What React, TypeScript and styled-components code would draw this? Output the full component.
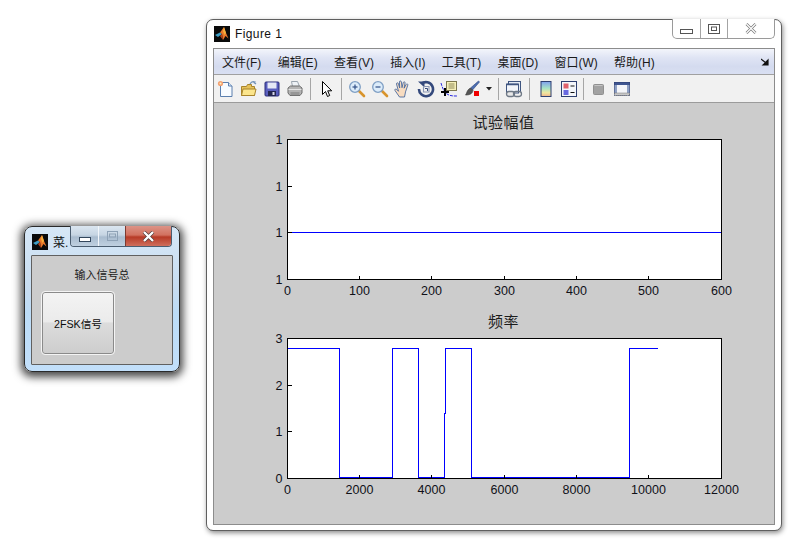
import styled, { createGlobalStyle } from "styled-components";

const GlobalStyle = createGlobalStyle`
    html, body {
        margin: 0;
        background: #ffffff;
    }
    * {
        box-sizing: border-box;
    }
`;

const FONT = `"Liberation Sans", "Noto Sans CJK SC", sans-serif`;

const Desktop = styled.div`
    position: relative;
    width: 794px;
    height: 541px;
    overflow: hidden;
    font-family: ${FONT};
`;

// ---- big figure window ----
const FigureWindow = styled.div`
    position: absolute;
    left: 206px;
    top: 19px;
    width: 576px;
    height: 512px;
    padding: 0 6px;
    background: #ffffff;
    border: 1px solid #5f5f5f;
    border-radius: 7px;
    box-shadow: 1px 2px 5px rgba(0, 0, 0, 0.45);
`;

const FigureTitleBar = styled.div`
    display: flex;
    align-items: center;
    gap: 5px;
    height: 28px;
    padding: 0 0 1px 1px;
`;

const FigureTitle = styled.span`
    font-size: 12px;
    letter-spacing: 0.4px;
    color: #111111;
`;

const FigureControls = styled.div`
    position: absolute;
    top: -1px;
    right: 6px;
    display: flex;
    height: 20px;
    background: #ffffff;
    border: 1px solid #9a9a9a;
    border-top: none;
    border-radius: 0 0 5px 5px;
`;

const ControlCell = styled.div<{ $w: number; $low?: boolean }>`
    display: flex;
    align-items: center;
    justify-content: center;
    width: ${p => p.$w}px;
    padding-top: ${p => (p.$low ? 5 : 0)}px;
    border-left: 1px solid #a4a4a4;
    &:first-child {
        border-left: none;
    }
`;

const FigureClient = styled.div`
    display: flex;
    flex-direction: column;
    height: 477px;
    width: 562px;
    border: 1px solid #8c8c8c;
`;

const MenuBar = styled.div`
    position: relative;
    display: flex;
    align-items: center;
    gap: 16.3px;
    height: 26px;
    padding: 0 0 0 8px;
    background: linear-gradient(#f3f5fb 0%, #dfe4f4 35%, #d4dbef 70%, #d9dff2 100%);
    border-bottom: 1px solid #a0a0a0;
`;

const MenuItem = styled.span`
    font-size: 12px;
    color: #1a1a1a;
    white-space: nowrap;
`;

const MenuCorner = styled.svg`
    position: absolute;
    right: 5px;
    top: 9px;
`;

const ToolBar = styled.div`
    display: flex;
    align-items: center;
    height: 28px;
    background: #f1f1f1;
    border-bottom: 1px solid #9b9b9b;
`;

const ToolCell = styled.div`
    display: flex;
    align-items: center;
    justify-content: center;
    flex: none;
    width: 23px;
    height: 22px;
`;

const DropCell = styled.div`
    display: flex;
    align-items: center;
    justify-content: center;
    flex: none;
    width: 12px;
    height: 22px;
`;

const ToolSep = styled.div<{ $w: number }>`
    display: flex;
    justify-content: center;
    flex: none;
    width: ${p => p.$w}px;
    height: 22px;
    &::before {
        content: "";
        width: 1px;
        background: #a6a6a6;
    }
`;

const PlotCanvas = styled.div`
    flex: 1;
    padding-top: 12px;
    background: #cccccc;
`;

const PlotBlock = styled.div`
    margin-bottom: 14px;
`;

const PlotTitle = styled.div`
    width: 560px;
    padding-left: 19px;
    height: 15px;
    line-height: 16px;
    text-align: center;
    font-size: 15px;
    letter-spacing: 0.5px;
    color: #1c1c1c;
`;

const PlotSvg = styled.svg`
    display: block;
    text {
        font-family: ${FONT};
        font-size: 12.5px;
        fill: #101018;
    }
`;

// ---- small menu window ----
const MenuWindow = styled.div`
    position: absolute;
    left: 24px;
    top: 226px;
    width: 156px;
    height: 146px;
    padding: 0 6px 7px;
    background: linear-gradient(#d6e7f6 0%, #c6dcf1 45%, #bcdcf7 60%, #c2dffa 100%);
    border: 1px solid #2a2a2a;
    border-radius: 8px;
    box-shadow: 0 2px 9px 3px rgba(0, 0, 0, 0.72);
`;

const MenuTitleBar = styled.div`
    display: flex;
    align-items: center;
    gap: 5px;
    height: 28px;
    padding: 1px 0 0 1px;
    font-size: 12px;
    color: #111111;
`;

const MenuTitleText = styled.span`
    width: 17px;
    overflow: hidden;
    white-space: nowrap;
`;

const MenuControls = styled.div`
    position: absolute;
    top: -1px;
    right: 7px;
    display: flex;
    height: 21px;
    border: 1px solid #4a5d70;
    border-top: none;
    border-radius: 0 0 4px 4px;
    overflow: hidden;
`;

const GlassCell = styled.div<{ $w: number; $red?: boolean; $low?: boolean }>`
    display: flex;
    align-items: center;
    justify-content: center;
    width: ${p => p.$w}px;
    padding-top: ${p => (p.$low ? 6 : 0)}px;
    border-left: 1px solid ${p => (p.$red ? "#7d3a30" : "#f2f6fa")};
    background: ${p =>
        p.$red
            ? "linear-gradient(#dc9387 0%, #d2715f 45%, #b73a26 55%, #cf6f5d 100%)"
            : "linear-gradient(#dbe6f0 0%, #c6d5e3 45%, #a9bccf 55%, #bfd0e0 100%)"};
    &:first-child {
        border-left: none;
    }
`;

const MenuClient = styled.div`
    display: flex;
    flex-direction: column;
    height: 110px;
    background: #cccccc;
    border: 1px solid #606060;
    border-radius: 1px;
`;

const MenuLabel = styled.div`
    margin-top: 12px;
    height: 14px;
    line-height: 14px;
    text-align: center;
    font-size: 11px;
    color: #1a1a1a;
`;

const BigButton = styled.button`
    display: flex;
    align-items: center;
    justify-content: center;
    width: 72px;
    height: 62px;
    margin: 10px 0 0 10px;
    padding: 0;
    font-family: ${FONT};
    font-size: 10.7px;
    color: #0c0c0c;
    background: linear-gradient(#f3f3f3 0%, #ebebeb 48%, #dcdcdc 50%, #cdcdcd 100%);
    border: 1px solid #8a8a8a;
    border-radius: 3px;
    outline: 1px solid #f4f4f4;
`;

// ---- drawings ----
function MatlabLogo() {
    return (
        <svg width="16" height="16" viewBox="0 0 16 16">
            <rect width="16" height="16" fill="#0a0a0a" />
            <polygon points="1,9 6,6.5 8,8 4,11" fill="#3f9fc6" />
            <polygon points="6,6.5 10,1 12,7 14.5,12.5 11.5,10 9,14 8,8" fill="#e8772a" />
            <polygon points="10,1 12,7 10.5,9 9,5" fill="#f5b13c" />
            <polygon points="8,8 9,14 6,10" fill="#b8431c" />
        </svg>
    );
}

function NewIcon() {
    return (
        <svg width="18" height="18" viewBox="0 0 18 18">
            <path d="M3.5 2.5h8l3.5 3.5v10.500h-11.500z" fill="#f7fbff" stroke="#5b7fae" />
            <path d="M11.500 2.500v3.500h3.500" fill="#d6e4f4" stroke="#5b7fae" />
            <circle cx="3.500" cy="3.500" r="2.600" fill="#f3a070" />
            <circle cx="3.500" cy="3.500" r="1" fill="#fff2c0" />
        </svg>
    );
}

function OpenIcon() {
    return (
        <svg width="18" height="18" viewBox="0 0 18 18">
            <path d="M1.500 6.500h5l1-2h4v2h3v9h-13z" fill="#e6c25a" stroke="#a8842c" />
            <path d="M1.500 15.500l1.500-6.500h13l-1.500 6.500z" fill="#fbe58c" stroke="#a8842c" />
            <path d="M10 4c1-2 3-3 5-2l-1 .5 2 1.500" fill="none" stroke="#6f8fb5" strokeWidth="1.200" />
        </svg>
    );
}

function SaveIcon() {
    return (
        <svg width="18" height="18" viewBox="0 0 18 18">
            <rect x="2" y="2" width="14" height="14" rx="1" fill="#5a5fbe" stroke="#2a2d78" />
            <rect x="4.500" y="2.500" width="9" height="6" fill="#e6e9f6" />
            <rect x="5" y="11" width="8" height="5" fill="#24264f" />
            <rect x="9.500" y="12" width="2" height="3" fill="#d8d8e8" />
        </svg>
    );
}

function PrintIcon() {
    return (
        <svg width="18" height="18" viewBox="0 0 18 18">
            <path d="M5.500 1.500h6l2 5h-7z" fill="#eef2f6" stroke="#9aa4ae" />
            <path d="M2 8l2.500-2h9l2.500 2v5l-2 2.500h-10l-2-2.500z" fill="#b4b4b4" stroke="#6d6d6d" />
            <path d="M2.500 9.500h13" stroke="#e4e4e4" />
            <path d="M4.500 13h9M4.500 15h9" stroke="#7a7a7a" />
        </svg>
    );
}

function ArrowIcon() {
    return (
        <svg width="18" height="18" viewBox="0 0 18 18">
            <path d="M4.500 1.500v13l3-3 2 5 2.200-1-2-4.700h4z" fill="#ffffff" stroke="#000000" />
        </svg>
    );
}

function ZoomIcon({ plus }: { plus?: boolean }) {
    return (
        <svg width="18" height="18" viewBox="0 0 18 18">
            <path d="M10.500 10.500l5.500 5.500" stroke="#d8942c" strokeWidth="2.600" strokeLinecap="round" />
            <circle cx="7" cy="7" r="5.300" fill="#dcecfa" stroke="#7f9fc4" strokeWidth="1.300" />
            <path d="M4.500 7h5" stroke="#2f4f86" strokeWidth="1.200" />
            {plus && <path d="M7 4.500v5" stroke="#2f4f86" strokeWidth="1.200" />}
        </svg>
    );
}

function HandIcon() {
    return (
        <svg width="18" height="18" viewBox="0 0 18 18">
            <path
                d="M5.500 17l-4.500-6.500c-.7-1.300.9-2 1.800-1l1.700 1.800-2-7.300c-.2-1.400 1.500-1.600 1.900-.4l1.300 4.400-.3-6c0-1.400 1.900-1.400 2 0l.6 5.700 1.200-5c.3-1.300 2-1.100 1.900.2l-1 5.300 2-3.700c.6-1.100 2.100-.5 1.700.6l-2.300 6.800-1 5.100z"
                fill="#f8dcc0"
                stroke="#4a6a9e"
                strokeWidth="0.900"
            />
        </svg>
    );
}

function RotateIcon() {
    return (
        <svg width="18" height="18" viewBox="0 0 18 18">
            <path d="M4.500 3.800a7 7 0 1 1-2.500 5.200" fill="none" stroke="#34497c" strokeWidth="2.600" />
            <path d="M1 1.500h6.500v6z" fill="#34497c" />
            <path d="M6.500 6.500h5.500v5.500h-5.500z" fill="none" stroke="#8b97b4" strokeWidth="1.100" />
            <path d="M8 8.500h2.500v2.500" fill="none" stroke="#34497c" />
        </svg>
    );
}

function CursorIcon() {
    return (
        <svg width="18" height="18" viewBox="0 0 18 18">
            <path d="M1 3c1 4 3 9 6 11s6 2 10 2" fill="none" stroke="#2a2ae0" strokeDasharray="3 1" />
            <rect x="6.500" y="1.500" width="10" height="9" fill="#f5efb8" stroke="#7d7850" />
            <path d="M8.500 4h6M8.500 6h6M8.500 8h6" stroke="#8f8a5c" />
            <path d="M5 8v8M1 12h8" stroke="#000000" strokeWidth="2" />
        </svg>
    );
}

function BrushIcon() {
    return (
        <svg width="18" height="18" viewBox="0 0 18 18">
            <path d="M15.500 1l1 1-7 8-2-2z" fill="#4c6db0" stroke="#2e4680" strokeWidth="0.600" />
            <path d="M7.500 8l2.500 2.500c-.5 3-3 4.500-7.500 4.500 1.500-1.500 1-5 5-7z" fill="#565656" stroke="#333333" strokeWidth="0.600" />
            <rect x="11" y="11" width="5" height="5" fill="#f00000" />
        </svg>
    );
}

function DropIcon() {
    return (
        <svg width="6" height="4" viewBox="0 0 6 4">
            <path d="M0 0h6l-3 3.500z" fill="#222222" />
        </svg>
    );
}

function LinkIcon() {
    return (
        <svg width="18" height="18" viewBox="0 0 18 18">
            <rect x="3.500" y="1.500" width="12" height="10" fill="#e4ebf5" stroke="#3f5580" />
            <rect x="1.500" y="4" width="12" height="9" fill="#f2f5fa" stroke="#3f5580" />
            <path d="M2 4.500h11" stroke="#3f5580" strokeWidth="1.500" />
            <rect x="1.500" y="11.500" width="8" height="5" rx="2.400" fill="#e8e8e8" stroke="#6f7986" strokeWidth="1.300" />
            <rect x="8.500" y="11.500" width="8" height="5" rx="2.400" fill="none" stroke="#6f7986" strokeWidth="1.300" />
        </svg>
    );
}

function ColorbarIcon() {
    return (
        <svg width="18" height="18" viewBox="0 0 18 18">
            <defs>
                <linearGradient id="cbar" x1="0" y1="0" x2="0" y2="1">
                    <stop offset="0" stopColor="#7fa0ee" />
                    <stop offset="0.450" stopColor="#a6e3c6" />
                    <stop offset="0.750" stopColor="#f0e8a0" />
                    <stop offset="1" stopColor="#f0b48c" />
                </linearGradient>
            </defs>
            <rect x="4" y="1.500" width="10" height="15" fill="url(#cbar)" stroke="#2e3f70" />
        </svg>
    );
}

function LegendIcon() {
    return (
        <svg width="18" height="18" viewBox="0 0 18 18">
            <rect x="1.500" y="1.500" width="15" height="15" fill="#f4f6fa" stroke="#2e3f70" />
            <rect x="3.500" y="3.500" width="5" height="5" fill="#e0606a" />
            <rect x="3.500" y="10" width="5" height="5" fill="#6a6ae0" />
            <path d="M10.500 6h4M10.500 12.500h4" stroke="#111111" />
        </svg>
    );
}

function HideIcon() {
    return (
        <svg width="18" height="18" viewBox="0 0 18 18">
            <rect x="3.500" y="4.500" width="10" height="10" rx="1" fill="#a2a2a2" stroke="#909090" />
            <path d="M4.500 5.500h8" stroke="#c4c4c4" />
        </svg>
    );
}

function ToolsIcon() {
    return (
        <svg width="18" height="18" viewBox="0 0 18 18">
            <rect x="1.500" y="2.500" width="15" height="13" fill="#f4f5f9" stroke="#2e3f70" />
            <rect x="1.500" y="2.500" width="15" height="2.500" fill="#3f5590" />
            <rect x="1.500" y="5" width="2.500" height="10.500" fill="#8fa0c4" />
            <rect x="14" y="5" width="2.500" height="10.500" fill="#8fa0c4" />
            <rect x="1.500" y="13" width="15" height="2.500" fill="#c8c8c8" stroke="#7a7a7a" strokeDasharray="1 1" />
        </svg>
    );
}

// axes box sits at a fixed offset in the chart svg
const AXES_X = 73.5;
const AXES_Y = 9.5;
const AXES_W = 434;
const AXES_H = 140;

interface IAxes {
    xLabels: string[];
    yLabels: string[];
    line: string;
}

function Axes({ xLabels, yLabels, line }: IAxes) {
    const bottom = AXES_Y + AXES_H;
    const xs = xLabels.map((_, i) => AXES_X + Math.floor((i * AXES_W) / (xLabels.length - 1)));
    const ys = yLabels.map((_, i) => bottom - Math.round((i * AXES_H) / (yLabels.length - 1)));
    return (
        <PlotSvg width="560" height="170" viewBox="0 0 560 170">
            <rect x={AXES_X} y={AXES_Y} width={AXES_W} height={AXES_H} fill="#ffffff" />
            <g shapeRendering="crispEdges">
                <path d={line} fill="none" stroke="#0000ff" strokeWidth="1" />
                {xs.map(x => (
                    <path key={x} d={`M${x} ${bottom}v-4`} stroke="#000000" />
                ))}
                {ys.map(y => (
                    <path key={y} d={`M${AXES_X} ${y}h4`} stroke="#000000" />
                ))}
                <rect x={AXES_X} y={AXES_Y} width={AXES_W} height={AXES_H} fill="none" stroke="#000000" />
            </g>
            {xLabels.map((t, i) => (
                <text key={t} x={xs[i]} y={bottom + 15.5} textAnchor="middle">
                    {t}
                </text>
            ))}
            {yLabels.map((t, i) => (
                <text key={i} x={AXES_X - 5} y={ys[i] + 4.5} textAnchor="end">
                    {t}
                </text>
            ))}
        </PlotSvg>
    );
}

// blue traces, in svg units
const AMP_LINE = `M${AXES_X} 102.5H${AXES_X + AXES_W}`;
const FREQ_LINE =
    "M73.5 19.5H125.5V148.5H178.5V19.5H204.5V148.5H230.5V84.5H231.5V19.5H257.5V148.5H415.5V19.5H443.5";

const MENUS = ["文件(F)", "编辑(E)", "查看(V)", "插入(I)", "工具(T)", "桌面(D)", "窗口(W)", "帮助(H)"];

function App() {
    return (
        <Desktop>
            <GlobalStyle />
            <MenuWindow>
                <MenuTitleBar>
                    <MatlabLogo />
                    <MenuTitleText>菜.</MenuTitleText>
                </MenuTitleBar>
                <MenuControls>
                    <GlassCell $w={27} $low>
                        <svg width="12" height="5" viewBox="0 0 12 5">
                            <rect x="0.5" y="0.5" width="11" height="4" fill="#ffffff" stroke="#33475c" />
                        </svg>
                    </GlassCell>
                    <GlassCell $w={27}>
                        <svg width="11" height="10" viewBox="0 0 11 10">
                            <rect x="0.5" y="0.5" width="10" height="9" fill="none" stroke="#8ea2b6" />
                            <rect x="2.5" y="3" width="6" height="3" fill="none" stroke="#8ea2b6" />
                        </svg>
                    </GlassCell>
                    <GlassCell $w={46} $red>
                        <svg width="13" height="11" viewBox="0 0 13 11">
                            <path d="M2 1l9 9M11 1l-9 9" stroke="#4a3a3a" strokeWidth="3.6" />
                            <path d="M2 1l9 9M11 1l-9 9" stroke="#ffffff" strokeWidth="2.4" />
                        </svg>
                    </GlassCell>
                </MenuControls>
                <MenuClient>
                    <MenuLabel>输入信号总</MenuLabel>
                    <BigButton>2FSK信号</BigButton>
                </MenuClient>
            </MenuWindow>

            <FigureWindow>
                <FigureTitleBar>
                    <MatlabLogo />
                    <FigureTitle>Figure 1</FigureTitle>
                </FigureTitleBar>
                <FigureControls>
                    <ControlCell $w={27} $low>
                        <svg width="13" height="5" viewBox="0 0 13 5">
                            <rect x="0.5" y="0.5" width="12" height="4" fill="#ffffff" stroke="#555555" />
                        </svg>
                    </ControlCell>
                    <ControlCell $w={27}>
                        <svg width="12" height="10" viewBox="0 0 12 10">
                            <rect x="0.5" y="0.5" width="11" height="9" fill="none" stroke="#555555" />
                            <rect x="3.5" y="3" width="5" height="3.5" fill="none" stroke="#555555" />
                        </svg>
                    </ControlCell>
                    <ControlCell $w={47}>
                        <svg width="12" height="11" viewBox="0 0 12 11">
                            <path d="M1.5 1l9 9M10.5 1l-9 9" stroke="#7a7a7a" strokeWidth="2.6" />
                            <path d="M1.5 1l9 9M10.5 1l-9 9" stroke="#ffffff" strokeWidth="1.2" />
                        </svg>
                    </ControlCell>
                </FigureControls>
                <FigureClient>
                    <MenuBar>
                        {MENUS.map(m => (
                            <MenuItem key={m}>{m}</MenuItem>
                        ))}
                        <MenuCorner width="8" height="8" viewBox="0 0 8 8">
                            <path d="M0 1l5 4M7 2v5h-5z" stroke="#111111" strokeWidth="1.2" fill="#111111" />
                        </MenuCorner>
                    </MenuBar>
                    <ToolBar>
                        <ToolCell><NewIcon /></ToolCell>
                        <ToolCell><OpenIcon /></ToolCell>
                        <ToolCell><SaveIcon /></ToolCell>
                        <ToolCell><PrintIcon /></ToolCell>
                        <ToolSep $w={9} />
                        <ToolCell><ArrowIcon /></ToolCell>
                        <ToolSep $w={7} />
                        <ToolCell><ZoomIcon plus /></ToolCell>
                        <ToolCell><ZoomIcon /></ToolCell>
                        <ToolCell><HandIcon /></ToolCell>
                        <ToolCell><RotateIcon /></ToolCell>
                        <ToolCell><CursorIcon /></ToolCell>
                        <ToolCell><BrushIcon /></ToolCell>
                        <DropCell><DropIcon /></DropCell>
                        <ToolSep $w={7} />
                        <ToolCell><LinkIcon /></ToolCell>
                        <ToolSep $w={9} />
                        <ToolCell><ColorbarIcon /></ToolCell>
                        <ToolCell><LegendIcon /></ToolCell>
                        <ToolSep $w={7} />
                        <ToolCell><HideIcon /></ToolCell>
                        <ToolCell><ToolsIcon /></ToolCell>
                    </ToolBar>
                    <PlotCanvas>
                        <PlotBlock>
                            <PlotTitle>试验幅值</PlotTitle>
                            <Axes
                                xLabels={["0", "100", "200", "300", "400", "500", "600"]}
                                yLabels={["1", "1", "1", "1"]}
                                line={AMP_LINE}
                            />
                        </PlotBlock>
                        <PlotBlock>
                            <PlotTitle>频率</PlotTitle>
                            <Axes
                                xLabels={["0", "2000", "4000", "6000", "8000", "10000", "12000"]}
                                yLabels={["0", "1", "2", "3"]}
                                line={FREQ_LINE}
                            />
                        </PlotBlock>
                    </PlotCanvas>
                </FigureClient>
            </FigureWindow>
        </Desktop>
    );
}

export default App;
